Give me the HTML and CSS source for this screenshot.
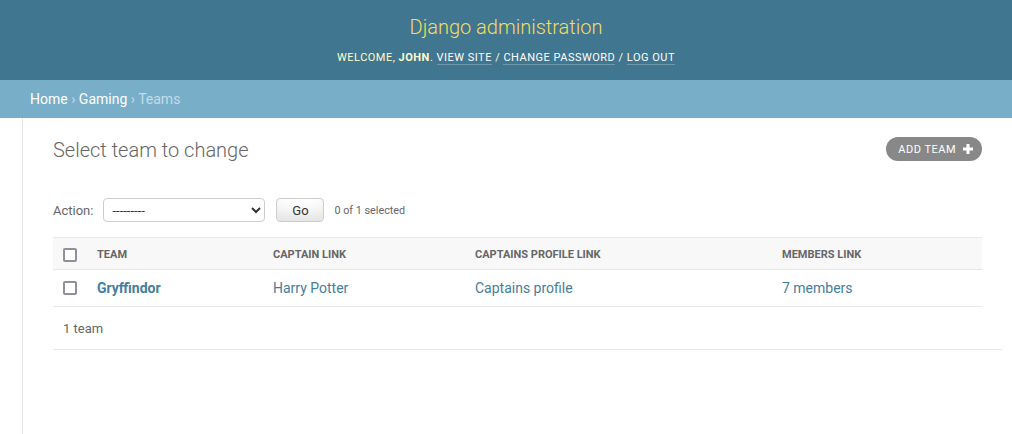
FILE: index.html
```html
<!DOCTYPE html>
<html lang="en">
<head>
<meta charset="utf-8">
<title>Select team to change | Django site admin</title>
<link rel="stylesheet" href="styles.css">
</head>
<body>
<header class="header">
  <h1 class="branding"><a href="#">Django administration</a></h1>
  <div class="user-tools">
    Welcome, <strong>John</strong>.
    <a href="#">View site</a> /
    <a href="#">Change password</a> /
    <a href="#">Log out</a>
  </div>
</header>
<nav class="breadcrumbs">
  <a href="#">Home</a> › <a href="#">Gaming</a> › Teams
</nav>
<div class="main">
  <div class="toggle-nav"></div>
  <div class="content">
    <div class="title-row">
      <h1 class="page-title">Select team to change</h1>
      <a class="addlink" href="#">Add team
        <svg class="plus" width="10" height="10" viewBox="0 0 10 10"><rect x="3.5" y="0" width="3" height="10" fill="#fff"/><rect x="0" y="3.5" width="10" height="3" fill="#fff"/></svg>
      </a>
    </div>
    <div class="actions">
      <label class="action-label">Action:</label>
      <select class="action-select"><option>---------</option></select>
      <button class="go" type="button">Go</button>
      <span class="counter">0 of 1 selected</span>
    </div>
    <table class="result-list">
      <colgroup>
        <col class="c-check"><col class="c-team"><col class="c-captain"><col class="c-profile"><col class="c-members">
      </colgroup>
      <thead>
        <tr>
          <th class="check"><input type="checkbox"></th>
          <th>Team</th>
          <th>Captain link</th>
          <th>Captains profile link</th>
          <th>Members link</th>
        </tr>
      </thead>
      <tbody>
        <tr>
          <td class="check"><input type="checkbox"></td>
          <th class="field-name"><a href="#">Gryffindor</a></th>
          <td><a href="#">Harry Potter</a></td>
          <td><a href="#">Captains profile</a></td>
          <td><a href="#">7 members</a></td>
        </tr>
      </tbody>
    </table>
    <p class="paginator">1 team</p>
  </div>
</div>
</body>
</html>
```

FILE: styles.css
```css
html, body {
  margin: 0;
  padding: 0;
  height: 100%;
}
body {
  font-family: Roboto, "Liberation Sans", sans-serif;
  font-size: 14px;
  color: #333;
  background: #fff;
  display: flex;
  flex-direction: column;
}
a { text-decoration: none; }

.header {
  background: #417690;
  color: #ffc;
  display: flex;
  flex-direction: column;
  align-items: center;
  padding: 12px 30px 12px;
  height: 56px;
}
.branding {
  margin: 0 0 6px;
  font-size: 20px;
  font-weight: 300;
  line-height: 30px;
}
.branding a { color: #f5dd5d; }
.user-tools {
  font-size: 11px;
  letter-spacing: 0.5px;
  text-transform: uppercase;
  line-height: 20px;
  color: #ffc;
}
.user-tools strong { font-weight: 700; }
.user-tools a {
  color: #fff;
  border-bottom: 1px solid rgba(255,255,255,0.25);
}

.breadcrumbs {
  background: #79aec8;
  color: #c4dce8;
  padding: 10px 30px;
  line-height: 18px;
  font-size: 14px;
}
.breadcrumbs a { color: #fff; }

.main {
  flex: 1;
  display: flex;
}
.toggle-nav {
  flex: 0 0 22px;
  border-right: 1px solid #e8e8e8;
}
.content {
  flex: 1;
  padding: 20px 30px 0;
  min-width: 0;
}
.title-row {
  display: flex;
  justify-content: space-between;
  align-items: flex-start;
}
.page-title {
  margin: 0 0 36px;
  font-size: 20px;
  font-weight: 300;
  line-height: 24px;
  color: #666;
}
.addlink {
  display: flex;
  align-items: center;
  gap: 7px;
  margin-top: -1px;
  height: 24px;
  box-sizing: border-box;
  padding: 0 9px 0 12px;
  background: #888;
  color: #fff;
  border-radius: 15px;
  font-size: 11px;
  letter-spacing: 0.5px;
  text-transform: uppercase;
}
.plus { display: block; }

.actions {
  display: flex;
  align-items: center;
  height: 24px;
  margin-bottom: 15px;
  color: #666;
}
.action-label {
  font-size: 13px;
}
.action-select {
  margin-left: 10px;
  width: 162px;
  height: 24px;
  border: 1px solid #ccc;
  border-radius: 4px;
  background: #fff;
  color: #333;
  font-family: Roboto, "Liberation Sans", sans-serif;
  font-size: 13px;
  padding: 0 0 0 4px;
}
.go {
  margin-left: 11px;
  width: 48px;
  height: 24px;
  border: 1px solid #ccc;
  border-radius: 4px;
  background: #fff;
  box-shadow: 0 -15px 20px -10px rgba(0,0,0,0.15) inset;
  font-family: Roboto, "Liberation Sans", sans-serif;
  font-size: 13px;
  color: #333;
  padding: 0;
}
.counter {
  margin-left: 10px;
  font-size: 10.8px;
  color: #666;
}

.result-list {
  width: 100%;
  border-collapse: collapse;
  table-layout: fixed;
}
.c-check { width: 34px; }
.c-team { width: 176px; }
.c-captain { width: 202px; }
.c-profile { width: 307px; }
.c-members { width: 210px; }
.result-list thead th {
  background: #f8f8f8;
  border-top: 1px solid #e8e8e8;
  border-bottom: 1px solid #e8e8e8;
  color: #666;
  font-size: 11px;
  font-weight: 700;
  text-transform: uppercase;
  text-align: left;
  padding: 9px 10px 6px;
  line-height: 16px;
  white-space: nowrap;
}
.result-list tbody td,
.result-list tbody th {
  border-bottom: 1px solid #e8e8e8;
  padding: 8px 10px 8px;
  line-height: 20px;
  font-size: 14px;
  text-align: left;
  font-weight: 400;
}
.result-list a { color: #447e9b; }
.result-list .field-name a { font-weight: 700; }
.result-list .check { padding-right: 0; }
.result-list input[type="checkbox"] {
  appearance: none;
  -webkit-appearance: none;
  margin: 0;
  display: block;
  width: 14px;
  height: 14px;
  box-sizing: border-box;
  border: 2px solid #8f8f9d;
  border-radius: 2px;
  background: #fff;
}

.paginator {
  margin: 0;
  padding: 11px 10px 9px;
  line-height: 22px;
  font-size: 13px;
  color: #666;
  border-bottom: 1px solid #e8e8e8;
  width: 100%;
}
```
